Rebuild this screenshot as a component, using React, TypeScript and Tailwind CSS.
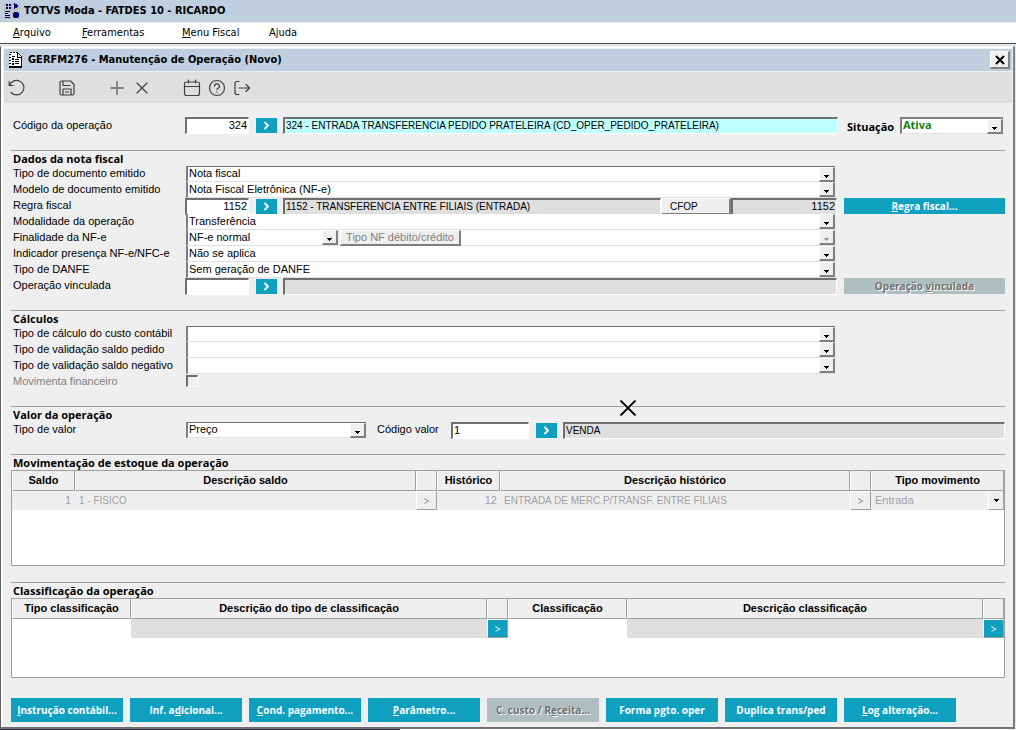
import React from 'react';

interface Option {
  label: string;
  id: string;
  value?: string;
}

const menuItems = [
  { key: 'A', rest: 'rquivo', width: 'w-[69px]' },
  { key: 'F', rest: 'erramentas', width: 'w-[100px]' },
  { key: 'M', rest: 'enu Fiscal', width: 'w-[87px]' },
  { key: '', rest: 'Ajuda', width: 'w-[60px]' },
];

const calcFields: Option[] = [
  { id: 'custo', label: 'Tipo de cálculo do custo contábil' },
  { id: 'saldoPedido', label: 'Tipo de validação saldo pedido' },
  { id: 'saldoNegativo', label: 'Tipo de validação saldo negativo' },
];

const sunken = 'border border-t-2 border-t-[#6f6f6f] border-l-2 border-l-[#6f6f6f] border-b-white border-r-white';
const raised = 'border-t border-l border-t-white border-l-white border-b-2 border-r-2 border-b-[#7f7f7f] border-r-[#7f7f7f]';

const TextBox: React.FC<{ label: string; id?: string; value?: string; className?: string; readOnly?: boolean }> = ({
  label,
  id,
  value = '',
  className = '',
  readOnly,
}) => (
  <input
    id={id}
    type="text"
    aria-label={id ? undefined : label}
    defaultValue={value}
    readOnly={readOnly}
    className={`h-[17px] min-w-0 rounded-none px-px pb-[2px] leading-3 outline-none ${sunken} ${className}`}
  />
);

const Combo: React.FC<{
  id?: string;
  label?: string;
  value?: string;
  className?: string;
  textClass?: string;
  disabled?: boolean;
}> = ({ id, label, value = '', className = '', textClass = '', disabled }) => (
  <div className={`relative h-4 min-w-0 border-b border-b-[#dfdfdf] bg-white ${className}`}>
    <select
      id={id}
      aria-label={label}
      disabled={disabled}
      defaultValue={value}
      className={`block h-full w-full appearance-none rounded-none bg-transparent pb-[2px] pl-px leading-3 outline-none ${textClass}`}
    >
      <option>{value}</option>
    </select>
    <span className={`pointer-events-none absolute top-0 right-0 flex h-[15px] w-4 items-center justify-center bg-[#efefef] ${raised}`}>
      <svg viewBox="0 0 5 3" className={`mt-1 h-[3px] w-[5px] ${disabled ? 'text-[#9f9f9f]' : 'text-black'}`} shapeRendering="crispEdges">
        <path d="M0 0h5v1H4v1H3v1H2V2H1V1H0z" fill="currentColor" />
      </svg>
    </span>
  </div>
);

const LookupButton: React.FC<{ label: string }> = ({ label }) => (
  <button type="button" aria-label={label} className="mt-px mr-[6px] ml-[7px] flex h-[15px] w-[21px] shrink-0 items-center justify-center bg-[#0f9fbf] text-white">
    <svg viewBox="0 0 7 9" className="h-[9px] w-[7px]">
      <path d="M1.5 1l3.5 3.5L1.5 8" fill="none" stroke="currentColor" strokeWidth="1.8" />
    </svg>
  </button>
);

const ActionButton: React.FC<{ children: React.ReactNode; className?: string; disabled?: boolean }> = ({ children, className = '', disabled }) => (
  <button
    type="button"
    disabled={disabled}
    className={`shrink-0 overflow-hidden font-['Open_Sans',sans-serif] text-[10px] font-bold whitespace-nowrap ${
      disabled ? 'bg-[#afbfbf] text-[#6f6f6f] [text-shadow:1px_1px_0_#ffffff]' : 'bg-[#0f9fbf] text-white'
    } ${className}`}
  >
    {children}
  </button>
);

const Section: React.FC<{ title: string; className?: string; children: React.ReactNode }> = ({ title, className = '', children }) => (
  <section className={`relative border-t border-[#9f9f9f] ${className}`}>
    <h2 className="h-[15px] pl-[2px] font-['Open_Sans',sans-serif] text-[11px] leading-[15px] font-bold">{title}</h2>
    {children}
  </section>
);

const Row: React.FC<{ label: string; htmlFor: string; muted?: boolean; side?: React.ReactNode; children: React.ReactNode }> = ({
  label,
  htmlFor,
  muted,
  side,
  children,
}) => (
  <div className="flex h-4">
    <label htmlFor={htmlFor} className={`w-[174px] shrink-0 pl-[2px] leading-[15px] whitespace-nowrap ${muted ? 'text-[#7f7f7f]' : ''}`}>
      {label}
    </label>
    <div className="flex min-w-0 flex-1">{children}</div>
    <div className="ml-[7px] flex w-[161px] shrink-0">{side}</div>
  </div>
);

const comboEdge = 'ml-px mr-[2px] flex-1 border-l-2 border-l-[#7f7f7f]';
const headCell = 'h-5 border-r border-b border-[#9f9f9f] border-l border-l-white bg-[#efefef] p-0 text-center font-bold leading-[17px]';

const ToolButton: React.FC<{ label: string; className?: string; children: React.ReactNode }> = ({ label, className = '', children }) => (
  <button type="button" aria-label={label} className={`flex h-[30px] w-[25px] items-center justify-center text-[#3f3f3f] ${className}`}>
    <svg viewBox="0 0 18 18" className="size-[18px]" fill="none" stroke="currentColor" strokeWidth="1.2" strokeLinecap="round" strokeLinejoin="round">
      {children}
    </svg>
  </button>
);

const Toolbar: React.FC = () => (
  <div className="mt-px flex h-[31px] items-center bg-[#dfdfdf]">
    <ToolButton label="Desfazer">
      <path d="M1.2 2.500v4h4M1.600 6.500a7.300 7.300 0 1 1 1.500 7" />
    </ToolButton>
    <ToolButton label="Salvar" className="ml-[25px]">
      <path d="M3.500 2h9l3.500 3.500v9q0 1.500-1.500 1.500h-11Q2 16 2 14.500v-11Q2 2 3.500 2zM5 2.500v4h7M5 16v-6h8v6M7.500 13h3" />
    </ToolButton>
    <ToolButton label="Novo" className="ml-[25px] opacity-60">
      <path d="M9 3v12M3 9h12" strokeWidth="1.8" />
    </ToolButton>
    <ToolButton label="Excluir">
      <path d="M4 4l10 10M14 4L4 14" />
    </ToolButton>
    <ToolButton label="Agenda" className="ml-[25px]">
      <path d="M3.500 3h11q2 0 2 2v9.500q0 2-2 2h-11q-2 0-2-2V5q0-2 2-2zM1.500 7.500h15M5.500 1v3M12.500 1v3" />
    </ToolButton>
    <ToolButton label="Ajuda">
      <circle cx="9" cy="9" r="7.500" />
      <path d="M6.500 7.200a2.500 2.300 0 1 1 3.500 2.100q-1 .5-1 1.500M9 13v.2" />
    </ToolButton>
    <ToolButton label="Sair">
      <path d="M6 2.500H4q-2 0-2 2v9q0 2 2 2h2M6 9h10.500M13 5.500L16.500 9 13 12.500" />
    </ToolButton>
  </div>
);

const StockTable: React.FC = () => (
  <div className="h-24 border border-[#9f9f9f] bg-white">
    <table className="w-full table-fixed border-separate border-spacing-0">
      <colgroup>
        <col className="w-[63px]" />
        <col className="w-[341px]" />
        <col className="w-[21px]" />
        <col className="w-[63px]" />
        <col />
        <col className="w-[21px]" />
        <col className="w-[133px]" />
      </colgroup>
      <thead>
        <tr>
          <th className={headCell}>Saldo</th>
          <th className={headCell}>Descrição saldo</th>
          <th className={headCell} aria-label="Buscar saldo" />
          <th className={headCell}>Histórico</th>
          <th className={headCell}>Descrição histórico</th>
          <th className={headCell} aria-label="Buscar histórico" />
          <th className={headCell}>Tipo movimento</th>
        </tr>
      </thead>
      <tbody>
        <tr className="h-[19px] bg-[#efefef] leading-[17px] text-[#9f9f9f]">
          <td className="p-0 pr-1 text-right">1</td>
          <td className="p-0 pl-1 text-[10px]">1 - FISICO</td>
          <td className="p-0">
            <GridButton label="Buscar saldo" disabled />
          </td>
          <td className="p-0 pr-[3px] text-right">12</td>
          <td className="p-0 pl-1 text-[10px]">ENTRADA DE MERC.P/TRANSF. ENTRE FILIAIS</td>
          <td className="p-0">
            <GridButton label="Buscar histórico" disabled />
          </td>
          <td className="p-0">
            <div className="relative h-[19px]">
              <select aria-label="Tipo movimento" disabled className="block h-full w-full appearance-none bg-transparent pl-1 opacity-100">
                <option>Entrada</option>
              </select>
              <span className="pointer-events-none absolute top-0 right-0 flex h-[19px] w-4 items-center justify-center border-r border-b border-l border-[#9f9f9f] border-l-white">
                <svg viewBox="0 0 5 3" className="h-[3px] w-[5px]" shapeRendering="crispEdges">
                  <path d="M0 0h5v1H4v1H3v1H2V2H1V1H0z" fill="#000" />
                </svg>
              </span>
            </div>
          </td>
        </tr>
      </tbody>
    </table>
  </div>
);

const GridButton: React.FC<{ label: string; disabled?: boolean }> = ({ label, disabled }) => (
  <button
    type="button"
    aria-label={label}
    disabled={disabled}
    className={`block h-[19px] w-full border border-t-white border-r-[#9f9f9f] border-b-[#9f9f9f] border-l-white pt-px font-['Open_Sans',sans-serif] text-[10px] leading-4 ${
      disabled ? 'bg-[#efefef] text-[#7f7f7f]' : 'bg-[#0f9fbf] text-white'
    }`}
  >
    &gt;
  </button>
);

const ClassTable: React.FC = () => (
  <div className="h-20 border border-[#9f9f9f] bg-white">
    <table className="w-full table-fixed border-separate border-spacing-0">
      <colgroup>
        <col className="w-[119px]" />
        <col />
        <col className="w-[21px]" />
        <col className="w-[119px]" />
        <col />
        <col className="w-[21px]" />
      </colgroup>
      <thead>
        <tr>
          <th className={headCell}>Tipo classificação</th>
          <th className={headCell}>Descrição do tipo de classificação</th>
          <th className={headCell} aria-label="Buscar tipo" />
          <th className={headCell}>Classificação</th>
          <th className={headCell}>Descrição classificação</th>
          <th className={headCell} aria-label="Buscar classificação" />
        </tr>
      </thead>
      <tbody>
        <tr className="h-[19px]">
          <td className="p-0" />
          <td className="bg-[#dfdfdf] p-0" />
          <td className="p-0">
            <GridButton label="Buscar tipo" />
          </td>
          <td className="p-0" />
          <td className="bg-[#dfdfdf] p-0" />
          <td className="p-0">
            <GridButton label="Buscar classificação" />
          </td>
        </tr>
      </tbody>
    </table>
  </div>
);

const Footer: React.FC = () => (
  <footer className="mt-5 flex gap-[7px]">
    <ActionButton className="h-6 w-28"><u>I</u>nstrução contábil...</ActionButton>
    <ActionButton className="h-6 w-28">Inf. a<u>d</u>icional...</ActionButton>
    <ActionButton className="h-6 w-28"><u>C</u>ond. pagamento...</ActionButton>
    <ActionButton className="h-6 w-28"><u>P</u>arâmetro...</ActionButton>
    <ActionButton className="h-6 w-28" disabled>C. custo / R<u>e</u>ceita...</ActionButton>
    <ActionButton className="h-6 w-28">Forma pgto. oper</ActionButton>
    <ActionButton className="h-6 w-28">Duplica trans/ped</ActionButton>
    <ActionButton className="h-6 w-28"><u>L</u>og alteração...</ActionButton>
  </footer>
);

const OperationForm: React.FC = () => (
  <main className="px-[7px] pt-[14px] pb-[5px]">
    <div className="flex h-[18px]">
      <label htmlFor="codigo" className="w-[174px] shrink-0 pl-[2px] leading-[17px]">Código da operação</label>
      <TextBox id="codigo" label="Código da operação" value="324" className="w-[64px] bg-white text-right" />
      <LookupButton label="Buscar operação" />
      <TextBox
        label="Descrição da operação"
        value="324 - ENTRADA TRANSFERENCIA PEDIDO PRATELEIRA (CD_OPER_PEDIDO_PRATELEIRA)"
        className="flex-1 bg-[#bfffff] text-[10px]"
        readOnly
      />
      <label htmlFor="situacao" className="ml-[9px] w-[53px] shrink-0 pt-px font-['Open_Sans',sans-serif] leading-[17px] font-bold">Situação</label>
      <Combo id="situacao" value="Ativa" className="mr-[2px] h-[17px] w-[103px] border-t-2 border-l-2 border-t-[#7f7f7f] border-l-[#7f7f7f]" textClass="font-['Open_Sans',sans-serif] font-bold text-[#0f7f0f]" />
    </div>

    <Section title="Dados da nota fiscal" className="mt-[15px]">
      <Row label="Tipo de documento emitido" htmlFor="tipoDoc">
        <Combo id="tipoDoc" value="Nota fiscal" className={`border-t border-t-[#6f6f6f] ${comboEdge}`} />
      </Row>
      <Row label="Modelo de documento emitido" htmlFor="modelo">
        <Combo id="modelo" value="Nota Fiscal Eletrônica (NF-e)" className={comboEdge} />
      </Row>
      <Row
        label="Regra fiscal"
        htmlFor="regra"
        side={<ActionButton className="h-4 w-full leading-4"><u>R</u>egra fiscal...</ActionButton>}
      >
        <TextBox id="regra" label="Regra fiscal" value="1152" className="w-[64px] bg-white text-right" />
        <LookupButton label="Buscar regra fiscal" />
        <TextBox label="Descrição da regra fiscal" value="1152 - TRANSFERENCIA ENTRE FILIAIS (ENTRADA)" className="flex-1 bg-[#dfdfdf] text-[10px]" readOnly />
        <button type="button" className={`h-[17px] w-[70px] bg-[#efefef] pl-2 text-left text-[10px] leading-[13px] ${raised}`}>CFOP</button>
        <TextBox label="CFOP" value="1152" className="w-[106px] bg-[#dfdfdf] text-right" readOnly />
      </Row>
      <Row label="Modalidade da operação" htmlFor="modalidade">
        <Combo id="modalidade" value="Transferência" className={comboEdge} />
      </Row>
      <Row label="Finalidade da NF-e" htmlFor="finalidade">
        <Combo id="finalidade" value="NF-e normal" className="ml-px w-[152px] border-l-2 border-l-[#7f7f7f]" />
        <button type="button" disabled className={`ml-[2px] h-4 w-[121px] bg-[#efefef] leading-[13px] text-[#7f7f7f] ${raised}`}>
          Tipo NF débito/crédito
        </button>
        <Combo label="Tipo NF débito/crédito" className="mr-[2px] flex-1" disabled />
      </Row>
      <Row label="Indicador presença NF-e/NFC-e" htmlFor="presenca">
        <Combo id="presenca" value="Não se aplica" className={comboEdge} />
      </Row>
      <Row label="Tipo de DANFE" htmlFor="danfe">
        <Combo id="danfe" value="Sem geração de DANFE" className={comboEdge} />
      </Row>
      <Row
        label="Operação vinculada"
        htmlFor="vinculada"
        side={<ActionButton className="h-4 w-full leading-4" disabled>Operação <u>v</u>inculada</ActionButton>}
      >
        <TextBox id="vinculada" label="Operação vinculada" className="w-[64px] bg-white" />
        <LookupButton label="Buscar operação vinculada" />
        <TextBox label="Descrição da operação vinculada" className="flex-1 bg-[#dfdfdf]" readOnly />
      </Row>
    </Section>

    <Section title="Cálculos" className="mt-4">
      {calcFields.map((f, i) => (
        <Row key={f.id} label={f.label} htmlFor={f.id}>
          <Combo id={f.id} className={`${comboEdge} ${i === 0 ? 'border-t border-t-[#6f6f6f]' : ''}`} />
        </Row>
      ))}
      <Row label="Movimenta financeiro" htmlFor="financeiro" muted>
        <input
          id="financeiro"
          type="checkbox"
          disabled
          className={`mt-px ml-px size-3 appearance-none rounded-none bg-[#efefef] ${sunken}`}
        />
      </Row>
    </Section>

    <Section title="Valor da operação" className="mt-4">
      <div className="flex h-4">
        <label htmlFor="tipoValor" className="w-[175px] shrink-0 pl-[2px] leading-[15px]">Tipo de valor</label>
        <Combo id="tipoValor" value="Preço" className="w-[180px] border-t border-l-2 border-t-[#6f6f6f] border-l-[#7f7f7f]" />
        <label htmlFor="codigoValor" className="ml-[11px] w-[74px] shrink-0 leading-[15px]">Código valor</label>
        <TextBox id="codigoValor" label="Código valor" value="1" className="w-[78px] bg-white" />
        <LookupButton label="Buscar valor" />
        <TextBox label="Descrição do valor" value="VENDA" className="flex-1 bg-[#dfdfdf] text-[10px]" readOnly />
      </div>
      {/* crosshair pointer */}
      <svg viewBox="0 0 18 18" className="pointer-events-none absolute -top-[8px] left-[608px] size-[18px]">
        <path d="M1.500 1.500l15 15M16.500 1.500l-15 15" stroke="#fff" strokeWidth="3.500" />
        <path d="M1.500 1.500l15 15M16.500 1.500l-15 15" stroke="#000" strokeWidth="1.800" />
      </svg>
    </Section>

    <Section title="Movimentação de estoque da operação" className="mt-4">
      <StockTable />
    </Section>

    <Section title="Classificação da operação" className="mt-4">
      <ClassTable />
    </Section>

    <Footer />
  </main>
);

export default function App() {
  return (
    <div className="flex min-h-screen flex-col bg-white font-['Liberation_Sans',Arial,sans-serif] text-[11px] text-black">
      <header className="flex h-[22px] items-center bg-[#bfcfdf] pl-1">
        <svg viewBox="0 0 16 16" className="size-4" shapeRendering="crispEdges">
          <rect width="16" height="16" fill="#c0c0c0" />
          <path
            d="M2 1h2v2H2zM5 1h2v2H5zM2 4h2v2H2zM5 4h2v2H5zM10 0h1v1h2v1h1v2h-1v1h-2v1h-1zM1 8h5v1H1zM1 10h3v1H1zM1 12h5v1H1zM1 14h5v1H1zM10 9h4v1h1v4h-1v1h-4v-1H9v-4h1z"
            fill="#00007f"
          />
        </svg>
        <h1 className="ml-1 font-['DejaVu_Sans_Condensed','DejaVu_Sans',sans-serif] text-[11px] font-bold">TOTVS Moda - FATDES 10 - RICARDO</h1>
      </header>
      <nav className="flex h-[21px] items-center border-t border-[#efefef] bg-white pl-[13px] font-['DejaVu_Sans_Condensed','DejaVu_Sans',sans-serif]">
        {menuItems.map((item) => (
          <button key={item.rest} type="button" className={`text-left ${item.width}`}>
            {item.key && <u>{item.key}</u>}
            {item.key ? item.rest : <>A<u>j</u>uda</>}
          </button>
        ))}
      </nav>

      <div className="flex-1 border-t border-[#4f4f4f] bg-[#dfe7ef] pt-[2px] pr-px">
        <div className="border-t border-r-2 border-b-2 border-l border-t-[#efefef] border-r-[#7f7f7f] border-b-[#6f6f6f] border-l-[#5f5f5f] bg-[#efefef]">
          <div className="border-t border-l-2 border-white pt-px pr-px pl-px">
            <div className="flex h-[22px] items-center bg-[#bfcfdf] pr-[2px] pl-[5px]">
              <svg viewBox="0 0 14 16" className="h-4 w-[14px]" shapeRendering="crispEdges">
                <path d="M1 0h8l4 4v12H1z" fill="#fff" />
                <path
                  d="M1 0h2v1H1zM4 0h2v1H4zM7 0h2v1H7zM9 1h1v1H9zM10 2h1v1h-1zM11 3h1v1h-1zM12 4h1v12h-1zM8 1h1v4h4v1H8zM0 2h2v1H0zM0 5h2v1H0zM0 8h2v1H0zM0 11h2v1H0zM0 14h13v2H0zM3 4h3v1H3zM3 6h2v2H3zM6 7h4v1H6zM3 9h2v1H3zM6 9h4v1H6zM3 11h2v2H3zM6 11h4v1H6z"
                  fill="#000"
                />
              </svg>
              <h2 className="ml-[5px] flex-1 font-['DejaVu_Sans_Condensed','DejaVu_Sans',sans-serif] text-[11px] font-bold">
                GERFM276 - Manutenção de Operação (Novo)
              </h2>
              <button type="button" aria-label="Fechar" className={`flex h-[18px] w-5 items-center justify-center bg-[#efefef] ${raised}`}>
                <svg viewBox="0 0 10 10" className="size-[10px]">
                  <path d="M1 1l8 8M9 1L1 9" stroke="#000" strokeWidth="2" />
                </svg>
              </button>
            </div>
            <Toolbar />
            <OperationForm />
          </div>
        </div>
        <div className="flex h-px bg-white">
          <div className="w-[400px] bg-[#2f2f3f]" />
        </div>
      </div>
    </div>
  );
}
